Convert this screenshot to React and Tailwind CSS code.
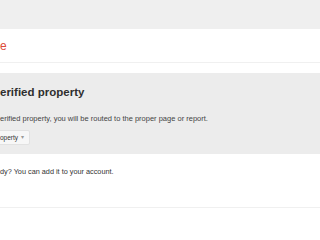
export default function App() {
  return (
    <div className="w-[320px] h-[240px] overflow-hidden bg-white font-['Liberation_Sans',Arial,sans-serif]">
      {/* top bar */}
      <div className="h-[29px] bg-[#efefef]" />

      {/* page title, cropped */}
      <div className="h-[34px] flex items-center border-b border-[#f0f0f0]">
        <span className="text-[12px] leading-none text-[#dd4b39]">e</span>
      </div>

      <div className="h-[10px]" />

      {/* verified property box */}
      <div className="h-[81px] bg-[#ececec] pt-[12px]">
        <h2 className="text-[11.5px] font-bold leading-[14px] text-[#2f2f2f]">erified property</h2>
        <p className="mt-[15px] text-[7.5px] leading-[9px] text-[#444]">
          erified property, you will be routed to the proper page or report.
        </p>
        <button className="mt-[7px] -ml-[3px] h-[15px] flex items-center gap-[3px] pl-[2px] pr-[5px] bg-[#f7f7f7] border border-[#e2e2e2] rounded-[2px] text-[6.5px] text-[#333]">
          operty
          <span className="text-[6px] text-[#999]">▾</span>
        </button>
      </div>

      {/* add property note */}
      <div className="h-[54px] border-b border-[#f0f0f0] pt-[13px]">
        <p className="text-[7.3px] leading-[9px] text-[#333]">dy? You can add it to your account.</p>
      </div>
    </div>
  );
}
